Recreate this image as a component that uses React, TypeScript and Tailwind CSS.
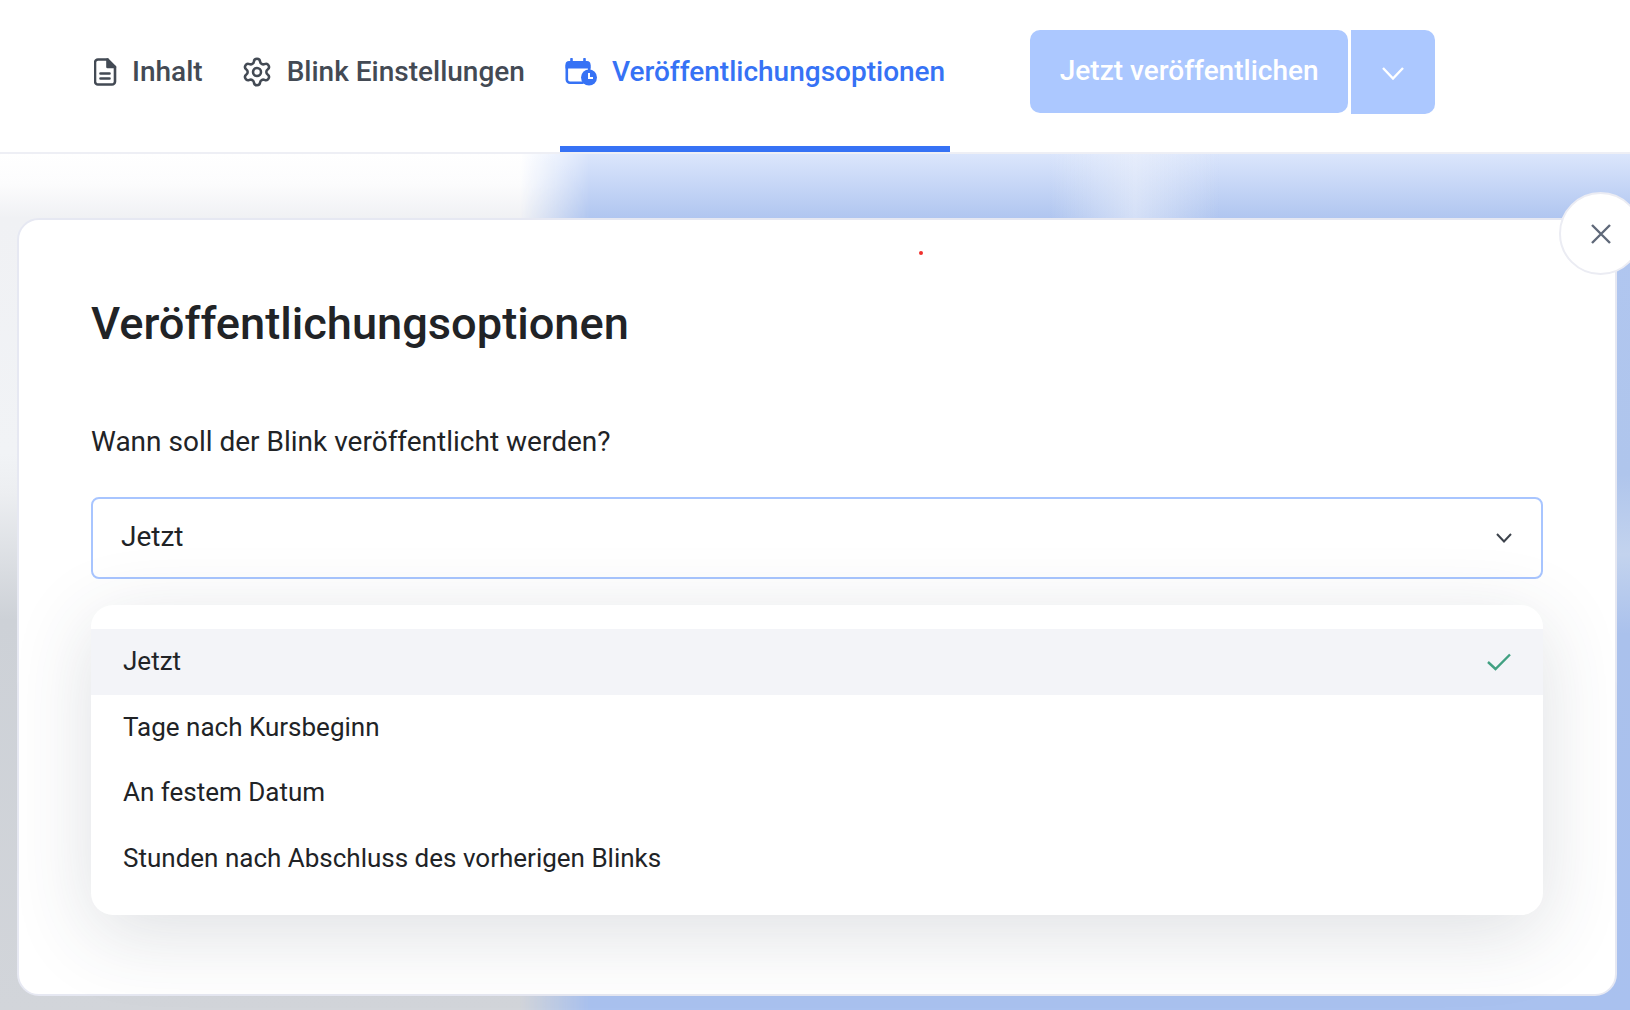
import React from "react";

const FONT = "font-['Roboto','Liberation_Sans',sans-serif]";

function DocIcon() {
  return (
    <svg width="23" height="28" viewBox="0.500 0 23 28" fill="none" stroke="currentColor" strokeWidth="2.600" strokeLinejoin="round" strokeLinecap="round" className="-ml-[1px]">
      <path d="M14 1.500H4.500a3 3 0 0 0-3 3v19a3 3 0 0 0 3 3h14a3 3 0 0 0 3-3V9z" />
      <path d="M14 1.500V9h7.500" fill="currentColor" />
      <path d="M7 15.500h9M7 20.500h9" />
    </svg>
  );
}

function GearIcon() {
  return (
    <svg width="32" height="32" viewBox="0 0 24 24" fill="none" stroke="currentColor" strokeWidth="1.900" strokeLinejoin="round" strokeLinecap="round" className="-ml-[2px]">
      <path d="M9.671 4.136a2.34 2.34 0 0 1 4.659 0 2.34 2.34 0 0 0 3.319 1.915 2.34 2.34 0 0 1 2.33 4.033 2.34 2.34 0 0 0 0 3.831 2.34 2.34 0 0 1-2.33 4.033 2.34 2.34 0 0 0-3.319 1.915 2.34 2.34 0 0 1-4.659 0 2.34 2.34 0 0 0-3.32-1.915 2.34 2.34 0 0 1-2.33-4.033 2.34 2.34 0 0 0 0-3.831A2.34 2.34 0 0 1 6.35 6.051a2.34 2.34 0 0 0 3.319-1.915" />
      <circle cx="12" cy="12" r="3" />
    </svg>
  );
}

function CalendarIcon() {
  return (
    <svg width="32" height="28" viewBox="0.500 2.500 32 28" fill="none">
      <path d="M7 3.500v5M20 3.500v5" stroke="currentColor" strokeWidth="2.600" strokeLinecap="round" />
      <path d="M4.500 5.500h18A3.500 3.500 0 0 1 26 9v4H1V9A3.500 3.500 0 0 1 4.500 5.500z" fill="currentColor" />
      <path d="M2.300 10v14A3.200 3.200 0 0 0 5.500 27.200H18M24.700 10v5" stroke="currentColor" strokeWidth="2.600" strokeLinecap="round" />
      <circle cx="24.500" cy="22" r="8" fill="currentColor" />
      <path d="M24.500 17.500V22.500H28.500" stroke="#fff" strokeWidth="2" fill="none" />
    </svg>
  );
}

function Chevron({ w, h, sw, color }: { w: number; h: number; sw: number; color: string }) {
  return (
    <svg width={w} height={h} viewBox={`0 0 ${w} ${h}`} fill="none" stroke={color} strokeWidth={sw}>
      <path d={`M1 1 L${w / 2} ${h - 1.500} L${w - 1} 1`} />
    </svg>
  );
}

function Tab({ icon, label, gap, active }: { icon: React.ReactNode; label: string; gap: string; active?: boolean }) {
  return (
    <div
      className={
        "h-full flex items-center px-[5px] border-b-[6px] pb-[3px] text-[28px] font-medium " +
        gap +
        " " +
        (active ? "border-[#3672f5] text-[#3672f5]" : "border-transparent text-[#434a54]")
      }
    >
      {icon}
      <span>{label}</span>
    </div>
  );
}

const OPTIONS = ["Jetzt", "Tage nach Kursbeginn", "An festem Datum", "Stunden nach Abschluss des vorherigen Blinks"];

export default function App() {
  return (
    <div className={"w-full h-[1010px] overflow-hidden flex flex-col bg-white " + FONT}>
      <header className="h-[154px] shrink-0 bg-white border-b-2 border-[#eeeff5] flex items-stretch pl-[90px]">
        <div className="flex items-stretch gap-[30px] h-[152px]">
          <Tab icon={<DocIcon />} label="Inhalt" gap="gap-[15px]" />
          <Tab icon={<GearIcon />} label="Blink Einstellungen" gap="gap-[14px]" />
          <Tab icon={<CalendarIcon />} label="Veröffentlichungsoptionen" gap="gap-[15px]" active />
        </div>
        <div className="flex items-start gap-[3px] ml-[80px] pt-[30px]">
          <button className="w-[318px] h-[83px] rounded-[10px] bg-[#acc8ff] text-white text-[28px] font-medium pb-[1px]">
            Jetzt veröffentlichen
          </button>
          <button className="w-[84px] h-[84px] rounded-r-[10px] bg-[#acc8ff] flex items-center justify-center pt-[2px]">
            <Chevron w={22} h={13} sw={2.400} color="#ffffff" />
          </button>
        </div>
      </header>

      <main className="relative flex-1 min-h-0 overflow-hidden pl-[17px] pr-[13px] pt-[64px] pb-[14px] flex bg-[linear-gradient(180deg,#dbe6fc_0px,#b0c6f0_64px,#afc5ec_320px,#c3d3ee_400px,#aac1ec_480px,#a9c1ef_856px)]">
        <div className="absolute inset-y-0 left-[1050px] w-[170px] bg-[linear-gradient(90deg,transparent,rgba(238,242,251,0.58)_50%,transparent)] [mask-image:linear-gradient(180deg,#000_0px,#000_64px,transparent_66px)]" />
        <div className="absolute inset-0 bg-[linear-gradient(180deg,#ffffff_0px,#fcfcfd_30px,#f0f1f4_64px,#f1f3f6_300px,#eceef1_340px,#cdd1d7_466px,#d2d5da_856px)] [mask-image:linear-gradient(90deg,#000_520px,transparent_590px)]" />

        <section className="relative flex-1 rounded-[22px] border-2 border-[#e6e8f2] bg-white pl-[72px] pr-[72px] pt-[78px]">
          <div className="absolute left-[900px] top-[31px] w-[4px] h-[4px] rounded-full bg-[#f0302c]" />
          <h1 className="text-[45.200px] leading-[52px] font-medium text-[#212326]">Veröffentlichungsoptionen</h1>
          <p className="mt-[74px] text-[28px] leading-[36px] text-[#212326]">Wann soll der Blink veröffentlicht werden?</p>

          <div className="mt-[37px] h-[82px] rounded-[8px] border-2 border-[#a8c5ff] flex items-center justify-between pl-[28px] pr-[29px]">
            <span className="text-[28px] text-[#212326] pb-[3px]">Jetzt</span>
            <Chevron w={16} h={10} sw={2} color="#3d434c" />
          </div>

          <div className="mt-[26px] rounded-[22px] bg-white pt-[24px] pb-[24px] shadow-[0_18px_80px_rgba(50,60,80,0.16)]">
            {OPTIONS.map((o, i) => (
              <div
                key={o}
                className={
                  "h-[65.500px] flex items-center justify-between pl-[32px] pr-[32px] text-[26px] text-[#212326] " +
                  (i === 0 ? "bg-[#f3f4f8]" : "")
                }
              >
                <span>{o}</span>
                {i === 0 && (
                  <svg width="24" height="18" viewBox="0 0 24 18" fill="none" stroke="#41a082" strokeWidth="2.400">
                    <path d="M1 9 L8.500 16 L23 1.500" />
                  </svg>
                )}
              </div>
            ))}
          </div>
        </section>

        <button className="absolute left-[1559px] top-[38px] w-[83px] h-[83px] rounded-full bg-white border-2 border-[#ebecf3] flex items-center justify-center">
          <svg width="20" height="20" viewBox="0 0 20 20" fill="none" stroke="#5f6979" strokeWidth="2.400">
            <path d="M1 1 L19 19 M19 1 L1 19" />
          </svg>
        </button>
      </main>
    </div>
  );
}
